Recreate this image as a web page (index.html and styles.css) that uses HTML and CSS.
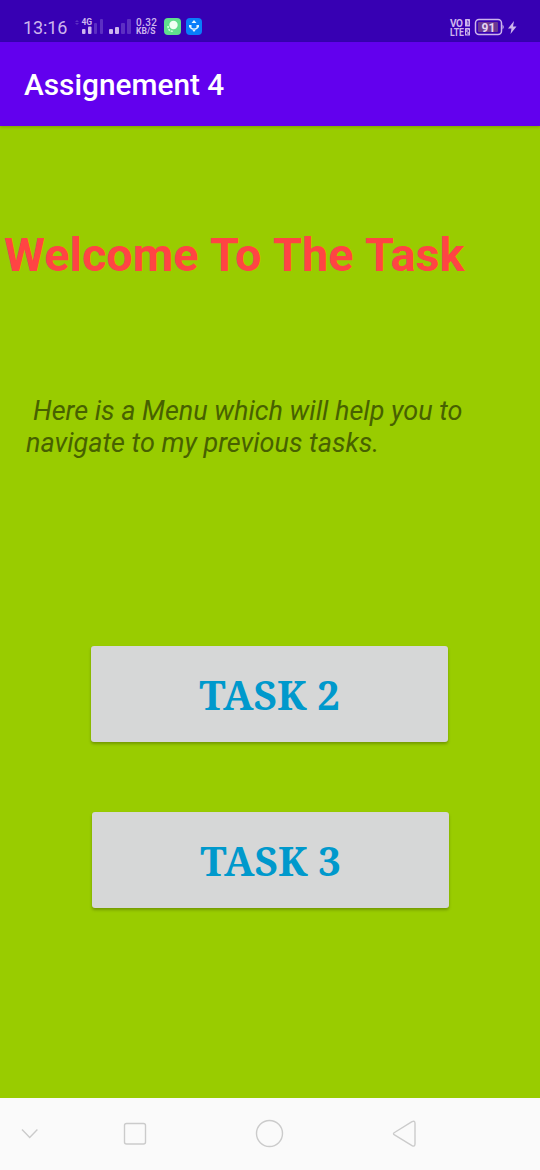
FILE: index.html
```html
<!DOCTYPE html>
<html lang="en">
<head>
<meta charset="utf-8">
<title>Assignement 4</title>
<link rel="stylesheet" href="styles.css">
</head>
<body>
<div class="screen">
  <header class="status">
    <span class="clock">13:16</span>
    <svg class="signals" width="60" height="42" viewBox="0 0 60 42">
      <path class="dim" d="M0 22l2-2 2 2zM0 23l2 2 2-2z"/>
      <text class="network" x="6.500" y="25" textLength="10.500">4G</text>
      <rect class="lit" x="7" y="29" width="3.500" height="5" rx="1"/>
      <rect class="lit" x="13" y="26.500" width="3.500" height="7.500" rx="1"/>
      <rect class="dim" x="19" y="23" width="3" height="11" rx="1"/>
      <rect class="dim" x="25" y="19" width="3" height="15" rx="1"/>
      <rect class="lit" x="34" y="29" width="4" height="5" rx="1"/>
      <rect class="lit" x="40" y="27" width="4" height="7" rx="1"/>
      <rect class="dim" x="46" y="23" width="4" height="11" rx="1"/>
      <rect class="dim" x="52" y="19" width="4" height="15" rx="1"/>
    </svg>
    <div class="speed"><span class="rate">0.32</span><span class="unit">KB/S</span></div>
    <svg class="apps" width="40" height="42" viewBox="0 0 40 42">
      <rect x="0" y="18" width="17" height="17" rx="4" fill="#60dd8d"/>
      <circle cx="9.500" cy="25" r="4.200" fill="#effff4"/>
      <path d="M4 26q0 6 6 5" fill="none" stroke="#d6ffe2" stroke-width="1.500" stroke-dasharray="2 1"/>
      <rect x="22" y="18" width="16" height="17" rx="4" fill="#087dfa"/>
      <path d="M30 20l2.500 3h-5zM28 29.500h4l-2 2.500zM25 25h2.500v2.500H25zM32.500 25H35v2.500h-2.500z" fill="#e8f5ff"/>
      <path d="M26.500 27q0 2 3.500 2t3.500-2" fill="none" stroke="#e8f5ff" stroke-width="1.200"/>
    </svg>
    <svg class="power" width="72" height="42" viewBox="0 0 72 42">
      <text class="volte" x="1" y="26.500" textLength="13">VO</text>
      <text class="volte" x="1" y="35.500" textLength="14" lengthAdjust="spacingAndGlyphs">LTE</text>
      <rect class="lit" x="16" y="19" width="5" height="7.500" rx=".5"/>
      <rect class="lit" x="16" y="28" width="5" height="7.500" rx=".5"/>
      <path d="M18 21h1v4M17.500 30h2v2h-2v2h2" fill="none" stroke="#3700b3" stroke-width=".8"/>
      <rect x="26.500" y="19.500" width="26" height="15" rx="3.500" fill="none" stroke="#cdb5ed" stroke-width="1.500"/>
      <rect x="29" y="22" width="20" height="10" rx="1" fill="#6b3a91"/>
      <path class="lit" d="M53.500 24.500q2.500 2.500 0 5z"/>
      <text class="charge" x="32.500" y="31.500" textLength="14">91</text>
      <path class="lit" d="M65 21l-6 7.500h3.500L61.500 34l6-7.500h-3.500z"/>
    </svg>
  </header>
  <div class="appbar">Assignement 4</div>
  <main class="content">
    <h1 class="welcome">Welcome To The Task</h1>
    <p class="intro"><span class="lead">Here is a Menu which will help you to</span><br><span class="follow">navigate to my previous tasks.</span></p>
    <button class="task">TASK 2</button>
    <button class="task third">TASK 3</button>
  </main>
  <nav class="navbar">
    <svg width="540" height="72" viewBox="0 0 540 72" fill="none" stroke="#cbcbcb" stroke-width="1.400">
      <path d="M22 31.500l7.700 8 7.700-8"/>
      <rect x="124.500" y="25.500" width="21" height="20.500" rx="2"/>
      <circle cx="269.500" cy="35.500" r="13"/>
      <path d="M394.500 34.500q-2 1.200 0 2.400l17.500 10.700q3 1.500 3-1.500V25.200q0-3-3-1.500z"/>
    </svg>
  </nav>
</div>
</body>
</html>
```
FILE: styles.css
```css
body { margin: 0; }
.screen {
  width: 540px;
  height: 1170px;
  display: flex;
  flex-direction: column;
  overflow: hidden;
  background: #99cc00;
  font-family: Roboto, sans-serif;
}
.status {
  display: flex;
  flex: none;
  height: 42px;
  background: #3700b3;
  color: #cdb5ed;
}
.clock {
  width: 52px;
  padding-left: 23px;
  font-size: 18px;
  line-height: 56px;
  letter-spacing: -0.1px;
}
.lit { fill: #cdb5ed; }
.dim { fill: #5c2fc2; }
.network { fill: #cdb5ed; font-size: 8.5px; font-weight: 700; }
.speed {
  width: 29px;
  padding-top: 18px;
  margin-left: 1px;
  font-weight: 500;
}
.rate, .unit { display: block; line-height: 9px; }
.rate { font-size: 10px; letter-spacing: 0.4px; }
.unit { font-size: 8.5px; letter-spacing: 0.1px; font-weight: 700; }
.apps { margin-left: -1px; }
.power { margin-left: auto; margin-right: 19px; }
.volte { fill: #cdb5ed; font-size: 10px; font-weight: 700; }
.charge { fill: #e5d4f5; font-size: 12px; font-weight: 700; }
.appbar {
  flex: none;
  height: 84px;
  padding-left: 24px;
  background: #6200ee;
  color: #fff;
  font-size: 29.8px;
  font-weight: 500;
  line-height: 86px;
  box-shadow: 0 1px 3px rgba(0, 0, 0, 0.2);
}
.content {
  flex: 1;
  display: flex;
  flex-direction: column;
}
.welcome {
  margin: 101px 0 0 4px;
  color: #ff4444;
  font-size: 46.8px;
  font-weight: 700;
  line-height: 56px;
  word-spacing: 1.1px;
  white-space: nowrap;
}
.intro {
  margin: 113px 0 0 26px;
  color: #476100;
  font-size: 27px;
  font-style: italic;
  line-height: 31.5px;
  white-space: nowrap;
}
.lead { margin-left: 7px; }
.task {
  width: 357px;
  height: 96px;
  margin: 187px 0 0 91px;
  padding: 0;
  border: 0;
  border-radius: 3px;
  background: #d6d7d7;
  box-shadow: 0 2px 3px rgba(0, 0, 0, 0.25);
  color: #0099cc;
  font: 700 40.4px "Noto Serif", "Liberation Serif", serif;
}
.third { margin: 70px 0 0 92px; }
.navbar {
  flex: none;
  height: 72px;
  background: #fafafa;
}
.navbar svg { display: block; }
```
